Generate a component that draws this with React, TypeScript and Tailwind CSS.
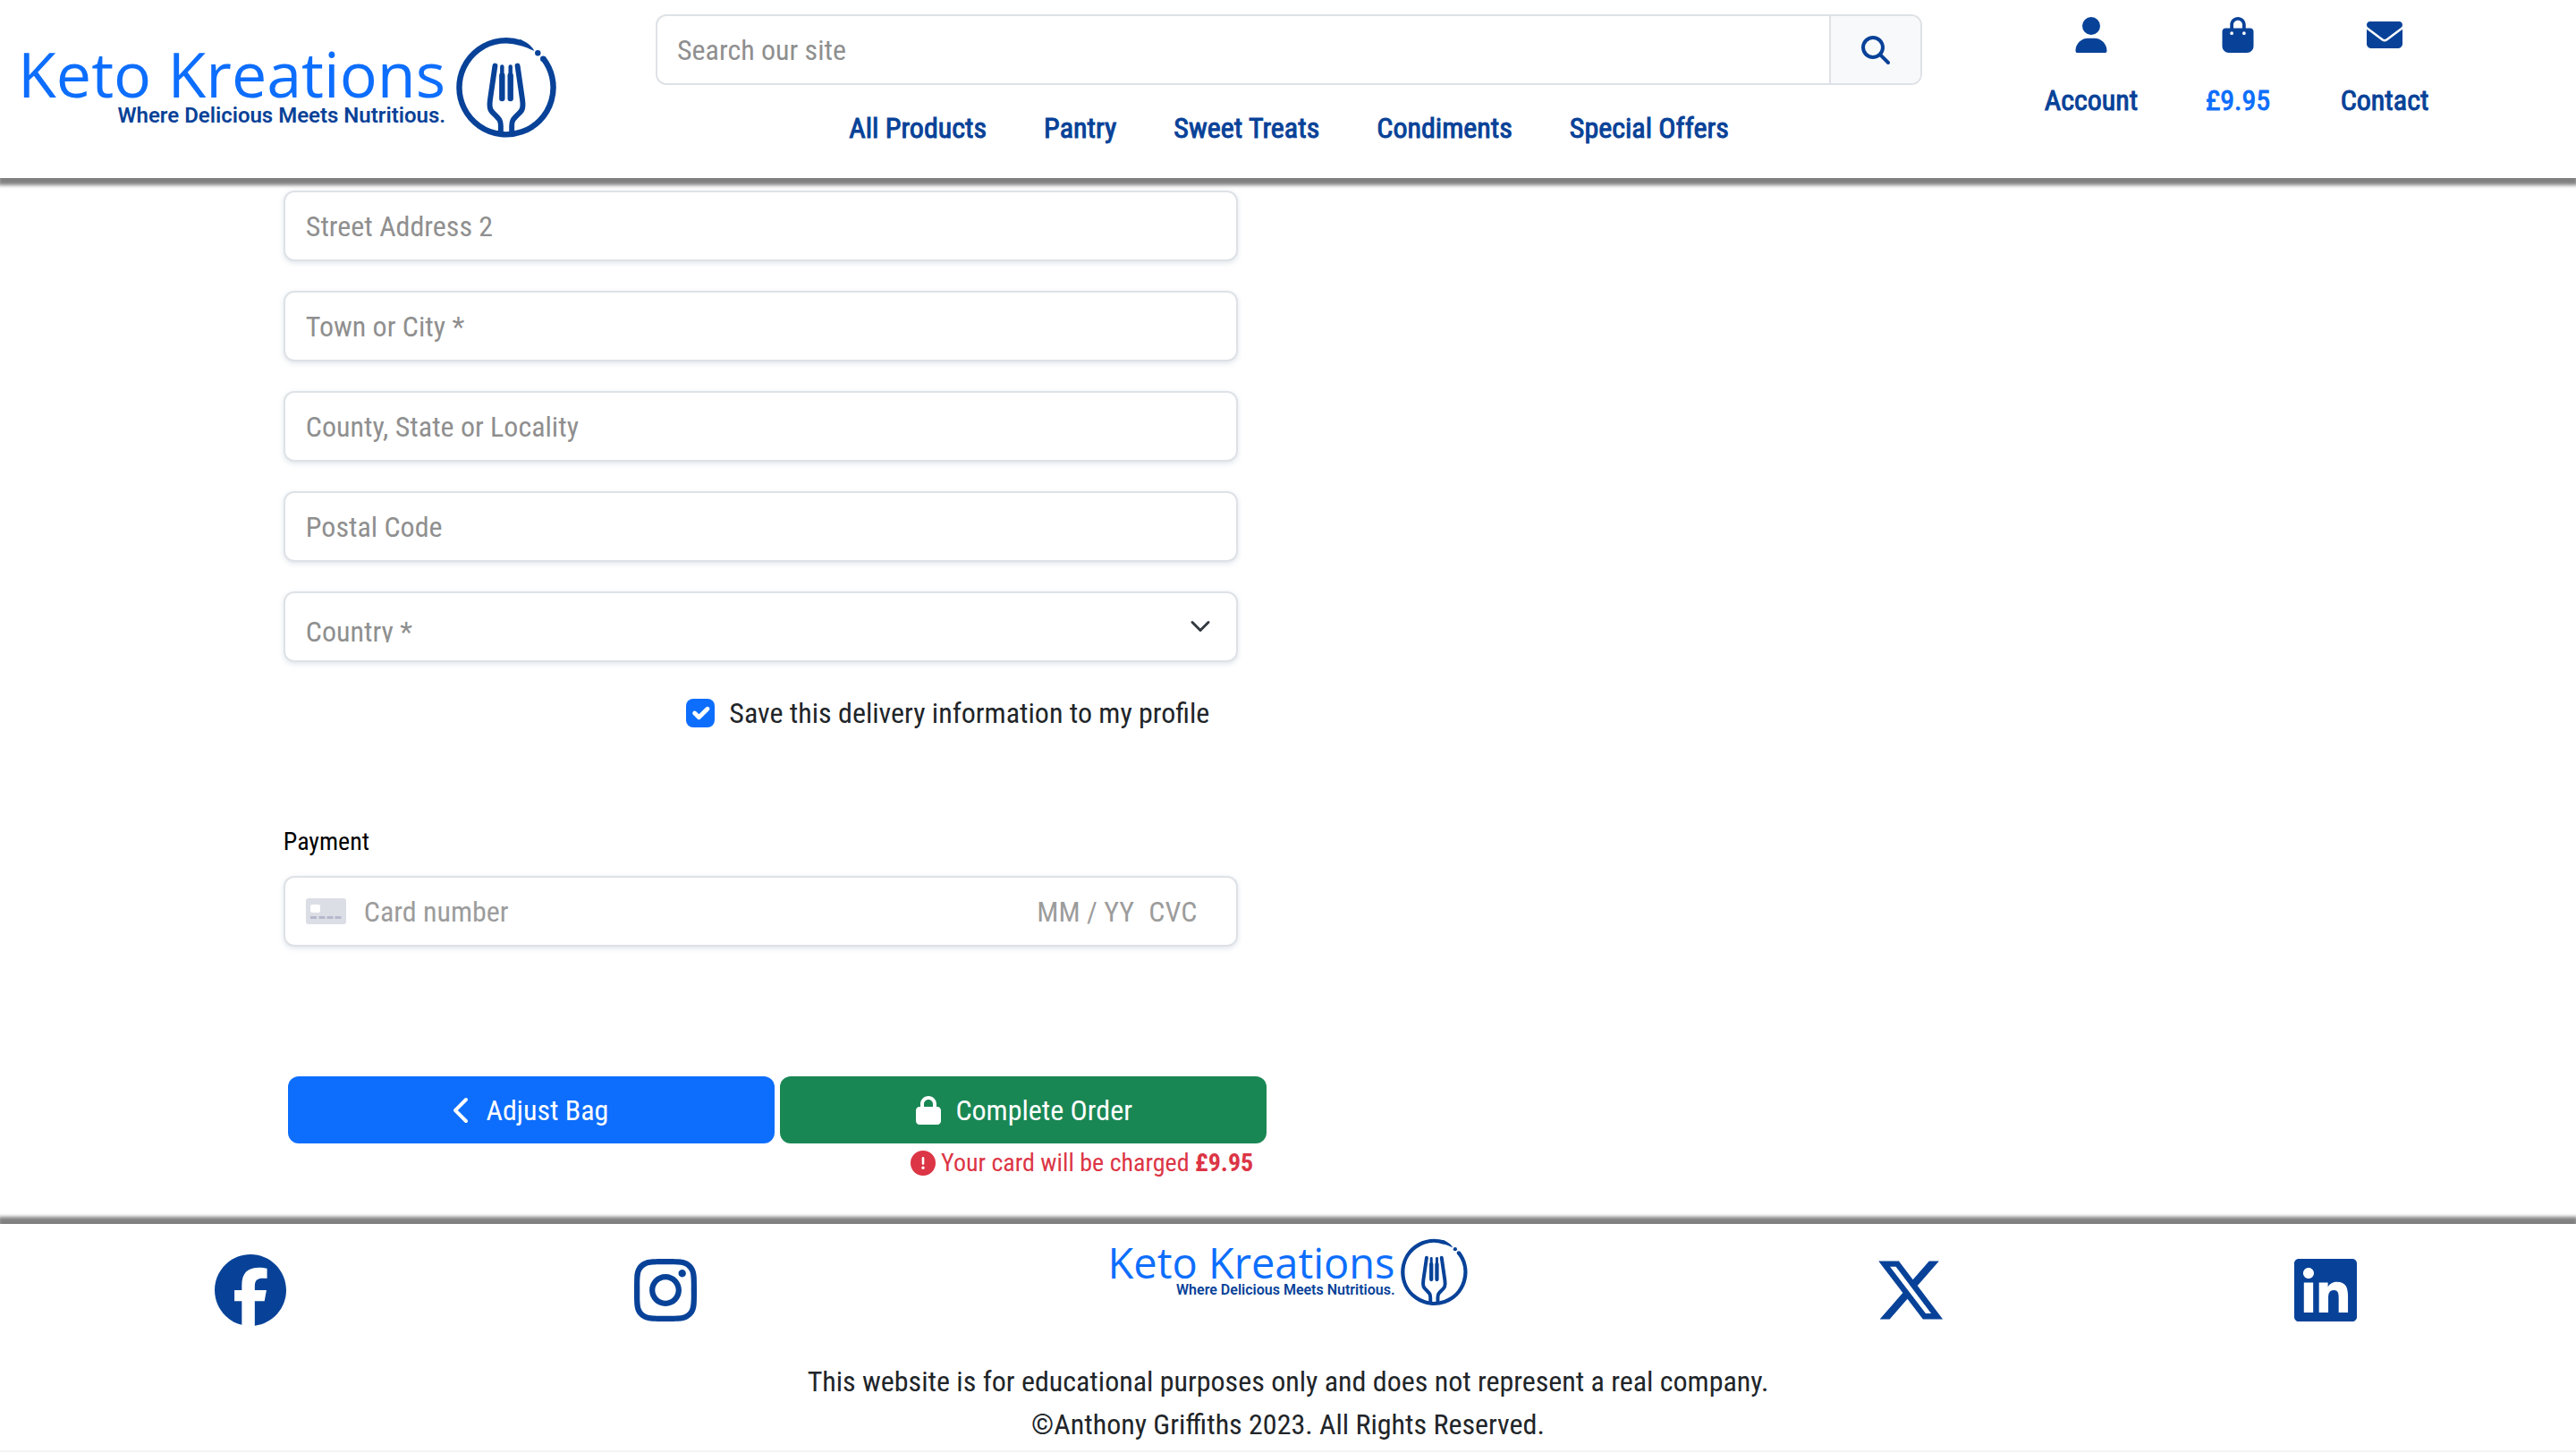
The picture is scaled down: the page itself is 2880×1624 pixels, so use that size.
import type { ReactNode } from "react";
import {
  FaBagShopping,
  FaChevronLeft,
  FaCircleExclamation,
  FaEnvelope,
  FaFacebook,
  FaInstagram,
  FaLinkedin,
  FaLock,
  FaMagnifyingGlass,
  FaUser,
  FaXTwitter,
} from "react-icons/fa6";

const navLinks = ["All Products", "Pantry", "Sweet Treats", "Condiments", "Special Offers"];

const addressFields = [
  { id: "street2", label: "Street Address 2" },
  { id: "town", label: "Town or City *" },
  { id: "county", label: "County, State or Locality" },
  { id: "postcode", label: "Postal Code" },
];

const fieldBox =
  "h-[79px] w-full rounded-xl border-2 border-[#dee2e6] bg-white shadow-[0_2px_6px_0_#dfe5eb]";

function ForkMark({ className }: { className: string }) {
  return (
    <svg viewBox="0 0 231 227" className={className} fill="none" aria-hidden="true">
      <path
        d="M197 47 A106.5 106.5 0 1 1 147 12"
        stroke="#084298"
        strokeWidth="13"
      />
      <circle cx="197" cy="48" r="6.5" fill="#084298" />
      <path d="M144 4 C156 8 171 17 177 30 C168 27 158 20 144 18 Z" fill="#084298" />
      <circle cx="185" cy="35" r="6.5" fill="#084298" />
      <g stroke="#084298" strokeLinecap="round" strokeLinejoin="round">
        <path
          strokeWidth="12"
          d="M88 64 L77 140 C74 162 78 166 88 175 C98 185 101 188 101 200 V214 M139 64 L150 140 C153 162 149 166 139 175 C129 185 126 188 126 200 V214"
        />
        <path strokeWidth="9" d="M104 66 V134 M123 66 V134" />
        <path strokeWidth="13" d="M104 86 V138 M123 86 V138" />
      </g>
    </svg>
  );
}

function HeaderLogo() {
  return (
    <a href="#home" className="flex items-center gap-3 font-['Open_Sans',sans-serif]">
      <span className="flex flex-col items-end">
        <span className="text-[70px] leading-[62px] text-[#0d6efd]">Keto Kreations</span>
        <span className="font-['Roboto',sans-serif] text-2xl leading-8 font-semibold text-[#084298]">
          Where Delicious Meets Nutritious.
        </span>
      </span>
      <ForkMark className="h-28 w-[114px]" />
    </a>
  );
}

function FooterLogo() {
  return (
    <a href="#home" className="flex items-center gap-1.5 font-['Open_Sans',sans-serif]">
      <span className="flex flex-col items-end">
        <span className="text-[47px] leading-[40px] text-[#0d6efd]">Keto Kreations</span>
        <span className="font-['Roboto',sans-serif] text-base leading-[22px] font-semibold text-[#084298]">
          Where Delicious Meets Nutritious.
        </span>
      </span>
      <ForkMark className="h-[76px] w-[76px]" />
    </a>
  );
}

function QuickLink({ icon, label, tone }: { icon: ReactNode; label: string; tone: string }) {
  return (
    <a href={"#" + label} className="flex flex-col items-center gap-[29px]">
      <span className="text-[40px] text-[#084298]">{icon}</span>
      <span className={tone}>{label}</span>
    </a>
  );
}

function Header() {
  return (
    <header className="relative grid grid-cols-4 bg-white pb-8 shadow-[0_6px_4px_2px_gray]">
      <div className="flex items-start pt-[42px] pl-5">
        <HeaderLogo />
      </div>

      <div className="col-span-2 pt-4 pr-[11px] pl-[13px]">
        <form role="search" className="flex h-[79px] rounded-xl border-2 border-[#dee2e6]">
          <input
            type="text"
            aria-label="Search our site"
            placeholder="Search our site"
            className="min-w-0 flex-1 rounded-l-xl bg-white px-[22px] outline-none placeholder:text-[#8f8f8f]"
          />
          <button
            type="button"
            aria-label="Search"
            className="flex w-[102px] items-center justify-center rounded-r-[10px] border-l-2 border-[#dee2e6] bg-[#f8f9fa] text-[#084298]"
          >
            <FaMagnifyingGlass />
          </button>
        </form>
        <nav className="mt-6 flex justify-center gap-16 text-[#084298] [-webkit-text-stroke:1px_currentColor]">
          {navLinks.map((name) => (
            <a key={name} href={"#" + name}>
              {name}
            </a>
          ))}
        </nav>
      </div>

      <div className="flex justify-center pt-[19px] pr-9">
        <div className="grid w-[492px] grid-cols-3 items-start [-webkit-text-stroke:1px_currentColor]">
          <QuickLink icon={<FaUser strokeWidth="0" />} label="Account" tone="text-[#084298]" />
          <QuickLink icon={<FaBagShopping strokeWidth="0" />} label="£9.95" tone="text-[#0d6efd]" />
          <QuickLink icon={<FaEnvelope strokeWidth="0" />} label="Contact" tone="text-[#084298]" />
        </div>
      </div>
    </header>
  );
}

function CardIcon() {
  return (
    <svg viewBox="0 0 45 29" className="h-[29px] w-[45px] shrink-0" aria-hidden="true">
      <rect width="45" height="29" rx="3" fill="#dcdee6" />
      <rect x="5" y="7" width="11" height="9" rx="2" fill="#fff" />
      <path d="M5 21.5h7M14.500 21.500h7M23.500 21.500h7M32.500 21.500h7" stroke="#b6b9cb" strokeWidth="3" />
    </svg>
  );
}

function CheckoutForm() {
  return (
    <form className="pt-3.5 pl-[11%]">
      <div className="w-[41.65%]">
        {addressFields.map(({ id, label }) => (
          <div key={id} className="mb-[33px]">
            <input
              id={id}
              type="text"
              aria-label={label}
              placeholder={label}
              className={`${fieldBox} block px-[23px] outline-none placeholder:text-[#8f8f8f]`}
            />
          </div>
        ))}

        <div className="relative">
          <select
            aria-label="Country"
            defaultValue=""
            className={`${fieldBox} block appearance-none px-[23px] pt-[29px] pb-5 leading-[29px] text-[#8f8f8f] outline-none`}
          >
            <option value="">Country *</option>
          </select>
          <svg
            viewBox="0 0 16 16"
            className="pointer-events-none absolute top-[27px] right-[30px] size-6"
            fill="none"
            stroke="#343a40"
            strokeWidth="2"
            strokeLinecap="round"
            strokeLinejoin="round"
            aria-hidden="true"
          >
            <path d="m2 5 6 6 6-6" />
          </svg>
        </div>

        <div className="mt-[33px] flex items-center justify-end gap-4 pr-8">
          <span className="relative flex size-8">
            <input
              id="save-info"
              type="checkbox"
              defaultChecked
              className="size-8 appearance-none rounded-lg bg-[#0d6efd]"
            />
            <svg
              viewBox="0 0 20 20"
              className="pointer-events-none absolute inset-0 size-8"
              fill="none"
              stroke="#fff"
              strokeWidth="3"
              strokeLinecap="round"
              strokeLinejoin="round"
              aria-hidden="true"
            >
              <path d="m6 10 3 3 6-6" />
            </svg>
          </span>
          <label htmlFor="save-info">Save this delivery information to my profile</label>
        </div>

        <fieldset className="mt-[99px]">
          <legend className="text-[28px] leading-[42px] text-black">Payment</legend>
          <div className={`${fieldBox} mt-[17px] flex items-center pr-[43px] pl-[23px]`}>
            <CardIcon />
            <input
              type="text"
              aria-label="Card number"
              placeholder="Card number"
              className="ml-5 min-w-0 flex-1 outline-none placeholder:text-[#9c9c9c]"
            />
            <input
              type="text"
              aria-label="Expiry date"
              placeholder="MM / YY"
              className="w-[125px] outline-none placeholder:text-[#9c9c9c]"
            />
            <input
              type="text"
              aria-label="CVC"
              placeholder="CVC"
              className="w-[55px] outline-none placeholder:text-[#9c9c9c]"
            />
          </div>
        </fieldset>
      </div>

      <div className="mt-[145px] ml-[5px] w-[42.7%]">
        <div className="grid grid-cols-2 gap-1.5 text-white">
          <button
            type="button"
            className="flex h-[75px] items-center justify-center gap-4 rounded-xl bg-[#0d6efd]"
          >
            <FaChevronLeft className="w-5" />
            Adjust Bag
          </button>
          <button
            type="button"
            className="flex h-[75px] items-center justify-center gap-3.5 rounded-xl bg-[#198754]"
          >
            <FaLock />
            Complete Order
          </button>
        </div>
        <p className="flex items-center justify-end gap-1.5 pr-[15px] text-[28px] leading-[44px] text-[#dc3545]">
          <FaCircleExclamation />
          <span>
            Your card will be charged <strong className="font-bold">£9.95</strong>
          </span>
        </p>
      </div>
    </form>
  );
}

function SocialLink({ label, children }: { label: string; children: ReactNode }) {
  return (
    <a href={"#" + label} aria-label={label} className="flex justify-center pt-[18px] text-[80px] text-[#084298]">
      {children}
    </a>
  );
}

function Footer() {
  return (
    <footer className="relative mt-[46px] border-b-2 border-gray-100 bg-white pt-4 shadow-[0_-6px_4px_2px_gray]">
      <div className="grid grid-cols-6 px-12">
        <SocialLink label="Facebook">
          <FaFacebook />
        </SocialLink>
        <SocialLink label="Instagram">
          <FaInstagram />
        </SocialLink>
        <div className="col-span-2 flex items-start justify-center">
          <FooterLogo />
        </div>
        <SocialLink label="X">
          <FaXTwitter />
        </SocialLink>
        <SocialLink label="LinkedIn">
          <FaLinkedin />
        </SocialLink>
      </div>
      <div className="mt-[38px] pb-[5px] text-center">
        <p>This website is for educational purposes only and does not represent a real company.</p>
        <p>©Anthony Griffiths 2023. All Rights Reserved.</p>
      </div>
    </footer>
  );
}

export default function App() {
  return (
    <div className="min-h-screen bg-white font-['Roboto_Condensed','Roboto',sans-serif] text-[32px] leading-[48px] text-[#212529]">
      <Header />
      <main>
        <CheckoutForm />
      </main>
      <Footer />
    </div>
  );
}
